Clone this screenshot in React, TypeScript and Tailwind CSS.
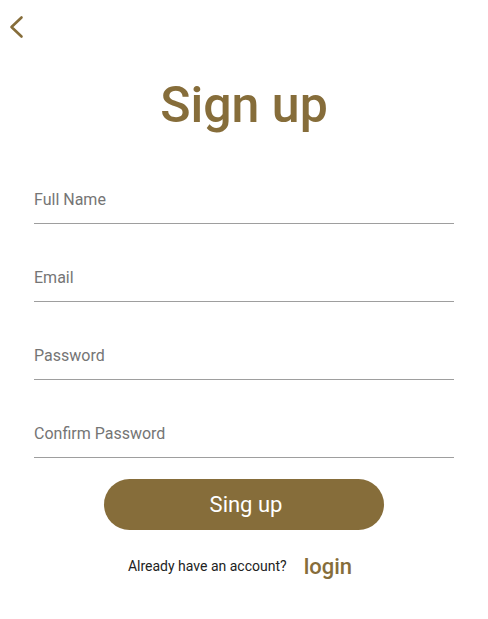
const fields = ['Full Name', 'Email', 'Password', 'Confirm Password'];

export default function App() {
  return (
    <div className="w-[488px] h-[619px] bg-white font-['Roboto',sans-serif]">
      <div className="h-[40px] pt-[15px] pl-[8px]">
        <svg width="18" height="24" viewBox="0 0 18 24" fill="none">
          <polyline points="13.5,2.5 3.5,12 13.5,21.5" stroke="#866d3a" strokeWidth="2.6" strokeLinecap="round" strokeLinejoin="round" />
        </svg>
      </div>

      <h1 className="mt-[40px] text-center text-[50px] leading-[50px] font-medium text-[#866d3a]">Sign up</h1>

      <div className="mt-[16px] px-[34px] flex flex-col">
        {fields.map((f) => (
          <div key={f} className="h-[78px] flex flex-col justify-end">
            <input
              placeholder={f}
              type={f.includes('Password') ? 'password' : 'text'}
              className="w-full pb-[13px] text-[16px] leading-[20px] text-[#444] placeholder:text-[#757575] border-b border-[#9e9e9e] outline-none bg-transparent"
            />
          </div>
        ))}
      </div>

      <div className="mt-[21px] flex justify-center">
        <button className="w-[280px] h-[51px] pl-[4px] rounded-full bg-[#866d3a] text-white text-[22px]">Sing up</button>
      </div>

      <div className="mt-[20px] pr-[8px] flex justify-center items-center gap-[17px]">
        <span className="text-[14px] text-[#222]">Already have an account?</span>
        <span className="text-[22px] font-medium text-[#866d3a]">login</span>
      </div>
    </div>
  );
}
